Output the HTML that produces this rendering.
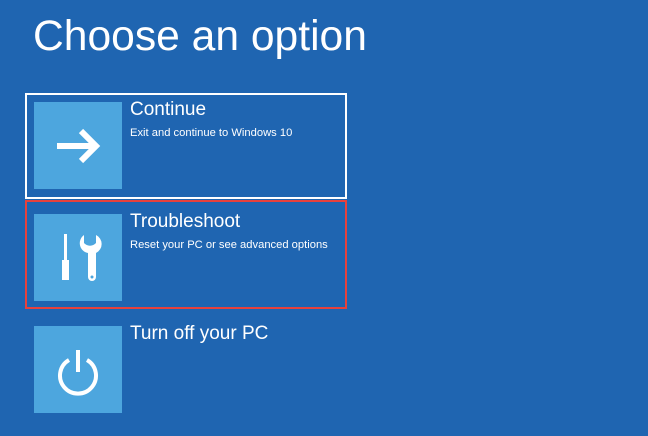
<html><head><style>
body{margin:0;width:648px;height:436px;background:#1f65b1;font-family:"Liberation Sans",sans-serif;color:#fff;position:relative;overflow:hidden}
.h{position:absolute;left:33px;top:12px;font-size:42.6px}
.box{position:absolute;left:25px;width:322px;box-sizing:border-box}
.tile{position:absolute;left:34px;width:88px;height:87px;background:#4da6de}
.t{position:absolute;left:130px;font-size:19px}
.s{position:absolute;left:130px;font-size:11.2px}
svg{position:absolute;left:0;top:0}
</style></head><body>
<div class="h">Choose an option</div>
<div class="box" style="top:93px;height:106px;border:2px solid #fff"></div>
<div class="box" style="top:200px;height:109px;border:2px solid #e8413c"></div>
<div class="tile" style="top:102px"><svg width="88" height="87"><path d="M23 44H62M47 29L62 44L47 59" stroke="#fff" stroke-width="6" fill="none"/></svg></div>
<div class="tile" style="top:214px"><svg width="88" height="87"><rect x="30" y="20" width="3" height="26" fill="#fff"/><rect x="28" y="46" width="7" height="20" fill="#fff"/><path d="M50 21v8a8 8 0 0 0 12 0v-8a10 10 0 0 1 0 18v24a4 4 0 0 1-8 0v-24a10 10 0 0 1-4-18z" fill="#fff"/><circle cx="58" cy="63" r="1.5" fill="#4da6de"/></svg></div>
<div class="tile" style="top:326px"><svg width="88" height="87"><path d="M35 34a18 18 0 1 0 18 0" stroke="#fff" stroke-width="4" fill="none"/><path d="M44 24v22" stroke="#fff" stroke-width="4"/></svg></div>
<div class="t" style="top:99px">Continue</div>
<div class="s" style="top:127px">Exit and continue to Windows 10</div>
<div class="t" style="top:211px">Troubleshoot</div>
<div class="s" style="top:239px">Reset your PC or see advanced options</div>
<div class="t" style="top:323px">Turn off your PC</div>
</body></html>
